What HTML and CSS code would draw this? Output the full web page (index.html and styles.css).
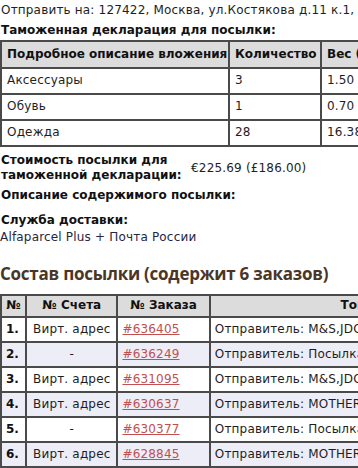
FILE: index.html
```html
<!DOCTYPE html>
<html lang="ru">
<head>
<meta charset="utf-8">
<link rel="stylesheet" href="styles.css">
</head>
<body>
<div class="page">
  <p class="line">Отправить на: 127422, Москва, ул.Костякова д.11 к.1, кв. 5</p>
  <p class="line bold">Таможенная декларация для посылки:</p>
  <table class="grid decl">
    <colgroup><col class="d1"><col class="d2"><col class="d3"></colgroup>
    <tr class="head"><th>Подробное описание вложения</th><th>Количество</th><th>Вес (кг)</th></tr>
    <tr><td>Аксессуары</td><td>3</td><td>1.50</td></tr>
    <tr><td>Обувь</td><td>1</td><td>0.70</td></tr>
    <tr><td>Одежда</td><td>28</td><td>16.38</td></tr>
  </table>
  <div class="cost">
    <div class="cost-label">Стоимость посылки для таможенной декларации:</div>
    <div class="cost-value">€225.69 (£186.00)</div>
  </div>
  <p class="desc">Описание содержимого посылки:</p>
  <p class="svc-title">Служба доставки:</p>
  <p class="svc">Alfaparcel Plus + Почта России</p>
  <h2 class="section">Состав посылки (содержит 6 заказов)</h2>
  <table class="grid orders">
    <colgroup><col class="o1"><col class="o2"><col class="o3"><col class="o4"></colgroup>
    <tr class="head"><th>№</th><th>№ Счета</th><th>№ Заказа</th><th>Товары</th></tr>
    <tr><td class="num">1.</td><td class="mid">Вирт. адрес</td><td><a href="#">#636405</a></td><td>Отправитель: M&amp;S,JDO,NEXT</td></tr>
    <tr class="alt"><td class="num">2.</td><td class="mid">-</td><td><a href="#">#636249</a></td><td>Отправитель: Посылка</td></tr>
    <tr><td class="num">3.</td><td class="mid">Вирт. адрес</td><td><a href="#">#631095</a></td><td>Отправитель: M&amp;S,JDO,NEXT</td></tr>
    <tr class="alt"><td class="num">4.</td><td class="mid">Вирт. адрес</td><td><a href="#">#630637</a></td><td>Отправитель: MOTHERCARE</td></tr>
    <tr><td class="num">5.</td><td class="mid">-</td><td><a href="#">#630377</a></td><td>Отправитель: Посылка</td></tr>
    <tr class="alt"><td class="num">6.</td><td class="mid">Вирт. адрес</td><td><a href="#">#628845</a></td><td>Отправитель: MOTHERCARE</td></tr>
  </table>
  <div class="foot"></div>
</div>
</body>
</html>
```

FILE: styles.css
```css
html, body {
  margin: 0;
  padding: 0;
  overflow: hidden;
  background: #fff;
}
.page {
  width: 540px;
  font-family: "DejaVu Sans", Verdana, sans-serif;
  font-size: 12px;
  letter-spacing: 0.18px;
  color: #1e1e1e;
}
p { margin: 0; }
.line {
  line-height: 20px;
  white-space: nowrap;
  padding-left: 1px;
}
.bold { font-weight: bold; color: #111; letter-spacing: 0; }

.grid {
  border-collapse: separate;
  border-spacing: 0;
  table-layout: fixed;
  border-left: 2px solid #4a4a4a;
  border-top: 2px solid #4a4a4a;
}
.grid th, .grid td {
  border-right: 2px solid #4a4a4a;
  border-bottom: 2px solid #4a4a4a;
  white-space: nowrap;
  overflow: hidden;
  line-height: 15px;
  text-align: left;
  vertical-align: middle;
}
.grid th { font-weight: bold; color: #111; letter-spacing: 0; }
.grid .head th { background: #dcdcdc; }

.decl { width: 402px; }
.decl .d1 { width: 228px; }
.decl .d2 { width: 92px; }
.decl .d3 { width: 82px; }
.decl th, .decl td { padding: 4px 5px 5px; }
.decl .head th { padding: 5px 5px 5px; }

.cost {
  display: flex;
  align-items: center;
  padding-top: 6px;
}
.cost-label {
  width: 188px;
  flex: none;
  font-weight: bold;
  color: #111;
  letter-spacing: 0;
  line-height: 14.5px;
  padding-left: 1px;
}
.cost-value {
  padding-left: 2px;
}
.desc {
  margin-top: 6px;
  font-weight: bold;
  color: #111;
  letter-spacing: 0;
  line-height: 15px;
  padding-left: 1px;
}
.svc-title {
  margin-top: 10px;
  font-weight: bold;
  color: #111;
  letter-spacing: 0;
  line-height: 15px;
  padding-left: 1px;
}
.svc {
  margin-top: 2px;
  line-height: 15px;
  color: #262640;
}
.section {
  margin: 17px 0 8px;
  font-family: "Open Sans", sans-serif;
  font-size: 17px;
  font-weight: bold;
  letter-spacing: -0.25px;
  line-height: 24px;
  color: #4b3626;
  white-space: nowrap;
}

.orders { width: 524px; }
.orders .o1 { width: 25px; }
.orders .o2 { width: 91px; }
.orders .o3 { width: 92px; }
.orders .o4 { width: 312px; }
.orders th, .orders td { padding: 4px 4px; }
.orders .head th { text-align: center; padding: 2px 4px 3px; }
.orders .alt td { background: #ededf8; }
.orders .num { font-weight: bold; color: #111; letter-spacing: 0; padding-left: 4px; }
.orders .mid { text-align: center; }
.orders a { color: #c0504d; text-decoration: underline; }
.foot {
  height: 10px;
  background: #e2e2e2;
}
```
